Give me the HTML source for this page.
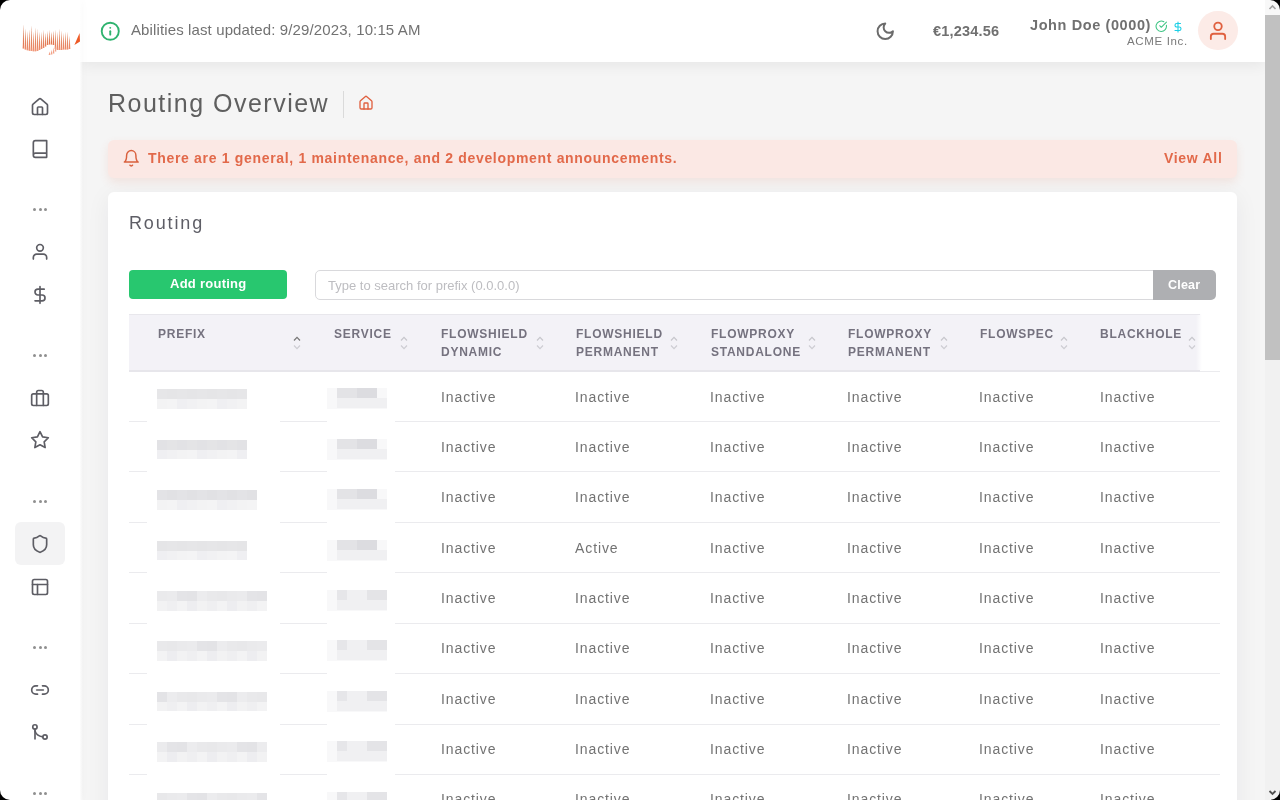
<!DOCTYPE html>
<html><head><meta charset="utf-8"><style>
*{box-sizing:border-box;margin:0;padding:0}
html,body{width:1280px;height:800px;overflow:hidden}
body{position:relative;background:#f5f5f5;font-family:"Liberation Sans",sans-serif;color:#6e6b7b}
.abs{position:absolute;white-space:nowrap}
#sidebar{position:absolute;left:0;top:0;width:80px;height:800px;background:#fff;box-shadow:0 0 10px rgba(0,0,0,0.04);z-index:3}
#sidefade{position:absolute;left:80px;top:0;width:3px;height:800px;background:linear-gradient(90deg,rgba(255,255,255,0.85),rgba(255,255,255,0));z-index:3}
#topbar{position:absolute;left:80px;top:0;width:1185px;height:62px;background:#fff;box-shadow:0 3px 14px rgba(0,0,0,0.065);z-index:2}
#scroll{position:absolute;left:1265px;top:0;width:15px;height:800px;background:#f1f1f1;z-index:4}
#thumb{position:absolute;left:0;top:15px;width:15px;height:345px;background:#c1c1c1}
#corners{position:absolute;left:0;top:0;width:1280px;height:800px;border-radius:10px;box-shadow:0 0 0 30px #000;z-index:10;pointer-events:none}
.ico{position:absolute;fill:none;stroke-linecap:round;stroke-linejoin:round;z-index:5}
.t{will-change:transform}
.blur{filter:blur(0.5px)}
.dots{position:absolute;left:33px;width:14px;height:4px}
.dots i{position:absolute;top:0;width:3.2px;height:3.2px;border-radius:50%;background:#8f8f8f}
</style></head><body>
<div id="sidebar"><div class="abs" style="left:15px;top:522px;width:50px;height:43px;border-radius:6px;background:#f3f3f4"></div><svg class="ico" style="left:30.0px;top:97.0px;width:20px;height:20px;stroke:#5d5d64;stroke-width:2" viewBox="0 0 24 24"><path d="M15 21v-8a1 1 0 0 0-1-1h-4a1 1 0 0 0-1 1v8"/><path d="M3 10a2 2 0 0 1 .709-1.528l7-5.999a2 2 0 0 1 2.582 0l7 5.999A2 2 0 0 1 21 10v9a2 2 0 0 1-2 2H5a2 2 0 0 1-2-2z"/></svg><svg class="ico" style="left:30.0px;top:139.0px;width:20px;height:20px;stroke:#5d5d64;stroke-width:2" viewBox="0 0 24 24"><path d="M4 19.5v-15A2.5 2.5 0 0 1 6.5 2H20v20H6.5a2.5 2.5 0 0 1 0-5H20"/></svg><svg class="ico" style="left:30.0px;top:242.0px;width:20px;height:20px;stroke:#5d5d64;stroke-width:2" viewBox="0 0 24 24"><circle cx="12" cy="7" r="4"/><path d="M4 20.5v-2a4 4 0 0 1 4-4h8a4 4 0 0 1 4 4v2"/></svg><svg class="ico" style="left:30.0px;top:285.0px;width:20px;height:20px;stroke:#5d5d64;stroke-width:2" viewBox="0 0 24 24"><line x1="12" x2="12" y1="2" y2="22"/><path d="M17 5H9.5a3.5 3.5 0 0 0 0 7h5a3.5 3.5 0 0 1 0 7H6"/></svg><svg class="ico" style="left:30.0px;top:388.0px;width:20px;height:20px;stroke:#5d5d64;stroke-width:2" viewBox="0 0 24 24"><rect width="20" height="14" x="2" y="7" rx="2" ry="2"/><path d="M16 21V5a2 2 0 0 0-2-2h-4a2 2 0 0 0-2 2v16"/></svg><svg class="ico" style="left:30.0px;top:430.0px;width:20px;height:20px;stroke:#5d5d64;stroke-width:2" viewBox="0 0 24 24"><polygon points="12 2 15.09 8.26 22 9.27 17 14.14 18.18 21.02 12 17.77 5.82 21.02 7 14.14 2 9.27 8.91 8.26 12 2"/></svg><svg class="ico" style="left:30.0px;top:534.0px;width:20px;height:20px;stroke:#5d5d64;stroke-width:2" viewBox="0 0 24 24"><path d="M20 13c0 5-3.5 7.5-7.66 8.95a1 1 0 0 1-.67-.01C7.5 20.5 4 18 4 13V6a1 1 0 0 1 1-1c2 0 4.5-1.2 6.24-2.72a1.170 1.17 0 0 1 1.52 0C14.51 3.81 17 5 19 5a1 1 0 0 1 1 1z"/></svg><svg class="ico" style="left:30.0px;top:577.0px;width:20px;height:20px;stroke:#5d5d64;stroke-width:2" viewBox="0 0 24 24"><rect width="18" height="18" x="3" y="3" rx="2"/><path d="M3 9h18"/><path d="M9 21V9"/></svg><svg class="ico" style="left:30.0px;top:680.0px;width:20px;height:20px;stroke:#5d5d64;stroke-width:2" viewBox="0 0 24 24"><path d="M9 17H7A5 5 0 0 1 7 7h2"/><path d="M15 7h2a5 5 0 1 1 0 10h-2"/><line x1="8" x2="16" y1="12" y2="12"/></svg><svg class="ico" style="left:30.0px;top:723.0px;width:20px;height:20px;stroke:#5d5d64;stroke-width:2" viewBox="0 0 24 24"><circle cx="5.9" cy="4.7" r="2.6"/><path d="M6 7.4V19.2"/><path d="M6 9.5Q7.5 15.5 15.4 16.6"/><circle cx="18" cy="16.8" r="2.6"/></svg><div class="dots" style="top:208px"><i style="left:0.1px"></i><i style="left:5.5px"></i><i style="left:10.8px"></i></div><div class="dots" style="top:354px"><i style="left:0.1px"></i><i style="left:5.5px"></i><i style="left:10.8px"></i></div><div class="dots" style="top:500px"><i style="left:0.1px"></i><i style="left:5.5px"></i><i style="left:10.8px"></i></div><div class="dots" style="top:646px"><i style="left:0.1px"></i><i style="left:5.5px"></i><i style="left:10.8px"></i></div><div class="dots" style="top:792px"><i style="left:0.1px"></i><i style="left:5.5px"></i><i style="left:10.8px"></i></div><svg style="position:absolute;left:0;top:0;width:80px;height:62px" viewBox="0 0 80 62"><defs><linearGradient id="lg" gradientUnits="userSpaceOnUse" x1="0" y1="24" x2="0" y2="52"><stop offset="0" stop-color="#b9532f"/><stop offset="0.55" stop-color="#d8673f"/><stop offset="1" stop-color="#f39c80"/></linearGradient><linearGradient id="lg2" gradientUnits="userSpaceOnUse" x1="0" y1="24" x2="0" y2="52"><stop offset="0" stop-color="#fff6ee"/><stop offset="0.5" stop-color="#fcd9c4"/><stop offset="1" stop-color="#f8b49c"/></linearGradient></defs><polygon points="23.5,24.3 24.55,48.5 22.45,48.5" fill="url(#lg2)"/><polygon points="23.5,24.3 24.1,48.5 22.9,48.5" fill="url(#lg)"/><polygon points="25.5,28 26.55,49.5 24.45,49.5" fill="url(#lg2)"/><polygon points="25.5,28 26.1,49.5 24.9,49.5" fill="url(#lg)"/><polygon points="27.5,31.1 28.55,50.2 26.45,50.2" fill="url(#lg2)"/><polygon points="27.5,31.1 28.1,50.2 26.9,50.2" fill="url(#lg)"/><polygon points="29.5,29.3 30.55,50.8 28.45,50.8" fill="url(#lg2)"/><polygon points="29.5,29.3 30.1,50.8 28.9,50.8" fill="url(#lg)"/><polygon points="31.5,24.8 32.55,51 30.45,51" fill="url(#lg2)"/><polygon points="31.5,24.8 32.1,51 30.9,51" fill="url(#lg)"/><polygon points="33.5,31.8 34.55,51.2 32.45,51.2" fill="url(#lg2)"/><polygon points="33.5,31.8 34.1,51.2 32.9,51.2" fill="url(#lg)"/><polygon points="35.5,27.2 36.55,51.2 34.45,51.2" fill="url(#lg2)"/><polygon points="35.5,27.2 36.1,51.2 34.9,51.2" fill="url(#lg)"/><polygon points="37.5,28.7 38.55,51 36.45,51" fill="url(#lg2)"/><polygon points="37.5,28.7 38.1,51 36.9,51" fill="url(#lg)"/><polygon points="39.5,31.6 40.55,50 38.45,50" fill="url(#lg2)"/><polygon points="39.5,31.6 40.1,50 38.9,50" fill="url(#lg)"/><polygon points="41.5,32.1 42.55,49 40.45,49" fill="url(#lg2)"/><polygon points="41.5,32.1 42.1,49 40.9,49" fill="url(#lg)"/><polygon points="43.5,29.9 44.55,48 42.45,48" fill="url(#lg2)"/><polygon points="43.5,29.9 44.1,48 42.9,48" fill="url(#lg)"/><polygon points="45.5,32.4 46.55,46.5 44.45,46.5" fill="url(#lg2)"/><polygon points="45.5,32.4 46.1,46.5 44.9,46.5" fill="url(#lg)"/><polygon points="47.5,31.1 48.55,45 46.45,45" fill="url(#lg2)"/><polygon points="47.5,31.1 48.1,45 46.9,45" fill="url(#lg)"/><polygon points="49.5,29.8 50.55,44.5 48.45,44.5" fill="url(#lg2)"/><polygon points="49.5,29.8 50.1,44.5 48.9,44.5" fill="url(#lg)"/><polygon points="51.5,31.6 52.55,44.5 50.45,44.5" fill="url(#lg2)"/><polygon points="51.5,31.6 52.1,44.5 50.9,44.5" fill="url(#lg)"/><polygon points="53.5,30.6 54.55,45 52.45,45" fill="url(#lg2)"/><polygon points="53.5,30.6 54.1,45 52.9,45" fill="url(#lg)"/><polygon points="55.5,30 56.55,49 54.45,49" fill="url(#lg2)"/><polygon points="55.5,30 56.1,49 54.9,49" fill="url(#lg)"/><polygon points="57.5,32.1 58.55,50 56.45,50" fill="url(#lg2)"/><polygon points="57.5,32.1 58.1,50 56.9,50" fill="url(#lg)"/><polygon points="59.5,28.5 60.55,50 58.45,50" fill="url(#lg2)"/><polygon points="59.5,28.5 60.1,50 58.9,50" fill="url(#lg)"/><polygon points="61.5,30 62.55,50 60.45,50" fill="url(#lg2)"/><polygon points="61.5,30 62.1,50 60.9,50" fill="url(#lg)"/><polygon points="63.5,33 64.55,49.5 62.45,49.5" fill="url(#lg2)"/><polygon points="63.5,33 64.1,49.5 62.9,49.5" fill="url(#lg)"/><polygon points="65.5,32.1 66.55,49.5 64.45,49.5" fill="url(#lg2)"/><polygon points="65.5,32.1 66.1,49.5 64.9,49.5" fill="url(#lg)"/><polygon points="67.5,32.1 68.55,49.5 66.45,49.5" fill="url(#lg2)"/><polygon points="67.5,32.1 68.1,49.5 66.9,49.5" fill="url(#lg)"/><polygon points="69.5,36 70.55,49 68.45,49" fill="url(#lg2)"/><polygon points="69.5,36 70.1,49 68.9,49" fill="url(#lg)"/><polygon points="49.5,51.5 50.4,55 48.6,55" fill="#f2a288"/><polygon points="51.5,49.5 52.4,54.5 50.6,54.5" fill="#f2a288"/><polygon points="53.5,47.5 54.4,53.5 52.6,53.5" fill="#f2a288"/><polygon points="55.5,46 56.4,51.5 54.6,51.5" fill="#f2a288"/><polygon points="79.6,33 74.4,45 80,41.5" fill="#ee5a26"/></svg></div><div id="sidefade"></div>
<div id="topbar"></div>
<svg class="ico" style="left:100.15px;top:21.05px;width:20.5px;height:20.5px;stroke:#2fb36f;stroke-width:2.2" viewBox="0 0 24 24"><circle cx="12" cy="12" r="10"/><path d="M12 16v-4"/><path d="M12 8h.01"/></svg><div class="abs t" style="left:131.4px;top:22.23px;font-size:15px;line-height:15px;font-weight:400;color:#727272;letter-spacing:0.12px;z-index:5;">Abilities last updated: 9/29/2023, 10:15 AM</div><svg class="ico" style="left:875.35px;top:21.35px;width:20.5px;height:20.5px;stroke:#6b6b6b;stroke-width:2.3" viewBox="0 0 24 24"><path d="M12 3a6 6 0 0 0 9 9 9 9 0 1 1-9-9Z"/></svg><div class="abs t" style="left:932.5px;top:23.71px;font-size:14.5px;line-height:14.5px;font-weight:700;color:#707070;letter-spacing:0.2px;z-index:5;">€1,234.56</div><div class="abs t" style="left:1030px;top:17.61px;font-size:14.5px;line-height:14.5px;font-weight:700;color:#707070;letter-spacing:0.6px;z-index:5;">John Doe (0000)</div><svg class="ico" style="left:1155.45px;top:20.05px;width:12.5px;height:12.5px;stroke:#3cc483;stroke-width:2" viewBox="0 0 24 24"><path d="M21.801 10A10 10 0 1 1 17 3.335"/><path d="m9 11 3 3L22 4"/></svg><svg class="ico" style="left:1171.8px;top:20.5px;width:12px;height:12px;stroke:#1ccfe6;stroke-width:2.2" viewBox="0 0 24 24"><line x1="12" x2="12" y1="2" y2="22"/><path d="M17 5H9.5a3.5 3.5 0 0 0 0 7h5a3.5 3.5 0 0 1 0 7H6"/></svg><div class="abs t" style="left:1127.3px;top:35.98px;font-size:11.5px;line-height:11.5px;font-weight:400;color:#7a7a7a;letter-spacing:0.65px;z-index:5;">ACME Inc.</div><div class="abs" style="left:1198px;top:10.7px;width:39.5px;height:39.5px;border-radius:50%;background:#fcebe7;z-index:5"></div><svg class="ico" style="left:1207.0px;top:20.0px;width:22px;height:22px;stroke:#e0603f;stroke-width:2" viewBox="0 0 24 24"><circle cx="12" cy="6.9" r="4.1"/><path d="M4.2 20.8v-2.8a3 3 0 0 1 3-3h9.6a3 3 0 0 1 3 3v2.8"/></svg>
<div class="abs t" style="left:108px;top:90.55px;font-size:25px;line-height:25px;font-weight:400;color:#5f5f5f;letter-spacing:1.49px;z-index:5;">Routing Overview</div><div class="abs" style="left:342.5px;top:90.5px;width:1px;height:27px;background:#dadada"></div><svg class="ico" style="left:358.0px;top:95.0px;width:16px;height:16px;stroke:#e0603f;stroke-width:2" viewBox="0 0 24 24"><path d="M15 21v-8a1 1 0 0 0-1-1h-4a1 1 0 0 0-1 1v8"/><path d="M3 10a2 2 0 0 1 .709-1.528l7-5.999a2 2 0 0 1 2.582 0l7 5.999A2 2 0 0 1 21 10v9a2 2 0 0 1-2 2H5a2 2 0 0 1-2-2z"/></svg><div class="abs" style="left:108px;top:140px;width:1129px;height:38px;border-radius:6px;background:#fbe8e4;box-shadow:0 4px 10px rgba(224,96,63,0.12)"></div><svg class="ico" style="left:121.55000000000001px;top:149.35px;width:18.5px;height:18.5px;stroke:#d9603d;stroke-width:1.9" viewBox="0 0 24 24"><path d="M6 8a6 6 0 0 1 12 0c0 7 3 9 3 9H3s3-2 3-9"/><path d="M10.3 21a1.94 1.94 0 0 0 3.4 0"/></svg><div class="abs t" style="left:148px;top:150.79px;font-size:14px;line-height:14px;font-weight:700;color:#e2694a;letter-spacing:0.68px;z-index:5;">There are 1 general, 1 maintenance, and 2 development announcements.</div><div class="abs t" style="left:1164px;top:151.29px;font-size:14px;line-height:14px;font-weight:700;color:#e2694a;letter-spacing:0.7px;z-index:5;">View All</div><div class="abs" style="left:108px;top:192px;width:1129px;height:700px;border-radius:6px;background:#fff;box-shadow:0 4px 24px rgba(34,41,47,0.06)"></div><div class="abs t" style="left:129.1px;top:214.36px;font-size:18px;line-height:18px;font-weight:400;color:#5e5e66;letter-spacing:1.85px;z-index:5;">Routing</div><div class="abs" style="left:129px;top:270px;width:158px;height:29px;border-radius:4px;background:#28c76f"></div><div class="abs t" style="left:169.5px;top:276.65px;font-size:13px;line-height:13px;font-weight:700;color:#ffffff;letter-spacing:0.26px;z-index:5;">Add routing</div><div class="abs" style="left:315px;top:270px;width:840px;height:30px;border:1px solid #d9d9dc;border-radius:5px 0 0 5px;background:#fff"></div><div class="abs t" style="left:328.1px;top:279.25px;font-size:13px;line-height:13px;font-weight:400;color:#bdbdc1;letter-spacing:0px;z-index:5;">Type to search for prefix (0.0.0.0)</div><div class="abs" style="left:1153px;top:270px;width:63px;height:30px;border-radius:0 5px 5px 0;background:#aeafb2"></div><div class="abs t" style="left:1168px;top:279.22px;font-size:12.5px;line-height:12.5px;font-weight:700;color:#ffffff;letter-spacing:0.2px;z-index:5;">Clear</div><div class="abs" style="left:129px;top:314px;width:1073px;height:56px;background:linear-gradient(90deg,#f3f2f7 0,#f3f2f7 1067px,rgba(243,242,247,0) 1073px)"></div><div class="abs" style="left:129px;top:314px;width:1071px;height:1px;background:#e8e7ec"></div><div class="abs" style="left:129px;top:369.5px;width:1071px;height:2px;background:#e7e6eb"></div><div class="abs" style="left:1200px;top:370.5px;width:19.5px;height:1px;background:#ebebee"></div><div class="abs t" style="left:157.5px;top:328.10px;font-size:12px;line-height:12px;font-weight:700;color:#75727f;letter-spacing:0.75px;z-index:5;">PREFIX</div><svg class="abs" style="left:293.4px;top:335px;width:8px;height:16px;z-index:5" viewBox="0 0 8 16"><path d="M1 5.5L4 2.3L7 5.5" fill="none" stroke="#777777" stroke-width="1.2"/><path d="M1 10.5L4 13.7L7 10.5" fill="none" stroke="#cdcdd3" stroke-width="1.2"/></svg><div class="abs t" style="left:334.25px;top:328.10px;font-size:12px;line-height:12px;font-weight:700;color:#75727f;letter-spacing:0.75px;z-index:5;">SERVICE</div><svg class="abs" style="left:399.6px;top:335px;width:8px;height:16px;z-index:5" viewBox="0 0 8 16"><path d="M1 5.5L4 2.3L7 5.5" fill="none" stroke="#c6c6cc" stroke-width="1.2"/><path d="M1 10.5L4 13.7L7 10.5" fill="none" stroke="#cdcdd3" stroke-width="1.2"/></svg><div class="abs t" style="left:440.8px;top:328.10px;font-size:12px;line-height:12px;font-weight:700;color:#75727f;letter-spacing:0.75px;z-index:5;">FLOWSHIELD</div><div class="abs t" style="left:440.8px;top:346.10px;font-size:12px;line-height:12px;font-weight:700;color:#75727f;letter-spacing:0.75px;z-index:5;">DYNAMIC</div><svg class="abs" style="left:535.9px;top:335px;width:8px;height:16px;z-index:5" viewBox="0 0 8 16"><path d="M1 5.5L4 2.3L7 5.5" fill="none" stroke="#c6c6cc" stroke-width="1.2"/><path d="M1 10.5L4 13.7L7 10.5" fill="none" stroke="#cdcdd3" stroke-width="1.2"/></svg><div class="abs t" style="left:576px;top:328.10px;font-size:12px;line-height:12px;font-weight:700;color:#75727f;letter-spacing:0.75px;z-index:5;">FLOWSHIELD</div><div class="abs t" style="left:576px;top:346.10px;font-size:12px;line-height:12px;font-weight:700;color:#75727f;letter-spacing:0.75px;z-index:5;">PERMANENT</div><svg class="abs" style="left:670px;top:335px;width:8px;height:16px;z-index:5" viewBox="0 0 8 16"><path d="M1 5.5L4 2.3L7 5.5" fill="none" stroke="#c6c6cc" stroke-width="1.2"/><path d="M1 10.5L4 13.7L7 10.5" fill="none" stroke="#cdcdd3" stroke-width="1.2"/></svg><div class="abs t" style="left:711px;top:328.10px;font-size:12px;line-height:12px;font-weight:700;color:#75727f;letter-spacing:0.75px;z-index:5;">FLOWPROXY</div><div class="abs t" style="left:711px;top:346.10px;font-size:12px;line-height:12px;font-weight:700;color:#75727f;letter-spacing:0.75px;z-index:5;">STANDALONE</div><svg class="abs" style="left:807.7px;top:335px;width:8px;height:16px;z-index:5" viewBox="0 0 8 16"><path d="M1 5.5L4 2.3L7 5.5" fill="none" stroke="#c6c6cc" stroke-width="1.2"/><path d="M1 10.5L4 13.7L7 10.5" fill="none" stroke="#cdcdd3" stroke-width="1.2"/></svg><div class="abs t" style="left:848.3px;top:328.10px;font-size:12px;line-height:12px;font-weight:700;color:#75727f;letter-spacing:0.75px;z-index:5;">FLOWPROXY</div><div class="abs t" style="left:848.3px;top:346.10px;font-size:12px;line-height:12px;font-weight:700;color:#75727f;letter-spacing:0.75px;z-index:5;">PERMANENT</div><svg class="abs" style="left:939.7px;top:335px;width:8px;height:16px;z-index:5" viewBox="0 0 8 16"><path d="M1 5.5L4 2.3L7 5.5" fill="none" stroke="#c6c6cc" stroke-width="1.2"/><path d="M1 10.5L4 13.7L7 10.5" fill="none" stroke="#cdcdd3" stroke-width="1.2"/></svg><div class="abs t" style="left:979.5px;top:328.10px;font-size:12px;line-height:12px;font-weight:700;color:#75727f;letter-spacing:0.75px;z-index:5;">FLOWSPEC</div><svg class="abs" style="left:1059.5px;top:335px;width:8px;height:16px;z-index:5" viewBox="0 0 8 16"><path d="M1 5.5L4 2.3L7 5.5" fill="none" stroke="#c6c6cc" stroke-width="1.2"/><path d="M1 10.5L4 13.7L7 10.5" fill="none" stroke="#cdcdd3" stroke-width="1.2"/></svg><div class="abs t" style="left:1100.2px;top:328.10px;font-size:12px;line-height:12px;font-weight:700;color:#75727f;letter-spacing:0.75px;z-index:5;">BLACKHOLE</div><svg class="abs" style="left:1187.5px;top:335px;width:8px;height:16px;z-index:5" viewBox="0 0 8 16"><path d="M1 5.5L4 2.3L7 5.5" fill="none" stroke="#c6c6cc" stroke-width="1.2"/><path d="M1 10.5L4 13.7L7 10.5" fill="none" stroke="#cdcdd3" stroke-width="1.2"/></svg><div class="abs" style="left:129px;top:421.00px;width:17.5px;height:1px;background:#ebebee"></div><div class="abs" style="left:280px;top:421.00px;width:47px;height:1px;background:#ebebee"></div><div class="abs" style="left:395px;top:421.00px;width:824.5px;height:1px;background:#ebebee"></div><div class="abs blur" style="left:157px;top:389.30px;width:10px;height:10px;background:#e6e6e8"></div><div class="abs blur" style="left:157px;top:399.30px;width:10px;height:9.5px;background:#f3f3f4"></div><div class="abs blur" style="left:167px;top:389.30px;width:10px;height:10px;background:#e5e5e7"></div><div class="abs blur" style="left:167px;top:399.30px;width:10px;height:9.5px;background:#f4f4f5"></div><div class="abs blur" style="left:177px;top:389.30px;width:10px;height:10px;background:#e6e6e8"></div><div class="abs blur" style="left:177px;top:399.30px;width:10px;height:9.5px;background:#efeff2"></div><div class="abs blur" style="left:187px;top:389.30px;width:10px;height:10px;background:#e5e5e7"></div><div class="abs blur" style="left:187px;top:399.30px;width:10px;height:9.5px;background:#f1f1f3"></div><div class="abs blur" style="left:197px;top:389.30px;width:10px;height:10px;background:#e6e6e8"></div><div class="abs blur" style="left:197px;top:399.30px;width:10px;height:9.5px;background:#f3f3f4"></div><div class="abs blur" style="left:207px;top:389.30px;width:10px;height:10px;background:#e5e5e7"></div><div class="abs blur" style="left:207px;top:399.30px;width:10px;height:9.5px;background:#f4f4f5"></div><div class="abs blur" style="left:217px;top:389.30px;width:10px;height:10px;background:#e6e6e8"></div><div class="abs blur" style="left:217px;top:399.30px;width:10px;height:9.5px;background:#efeff2"></div><div class="abs blur" style="left:227px;top:389.30px;width:10px;height:10px;background:#e5e5e7"></div><div class="abs blur" style="left:227px;top:399.30px;width:10px;height:9.5px;background:#f1f1f3"></div><div class="abs blur" style="left:237px;top:389.30px;width:10px;height:10px;background:#e6e6e8"></div><div class="abs blur" style="left:237px;top:399.30px;width:10px;height:9.5px;background:#f3f3f4"></div><div class="abs blur" style="left:327px;top:388.30px;width:60px;height:21px;background:#f8f8f9"></div><div class="abs blur" style="left:337px;top:388.30px;width:20px;height:10px;background:#e3e3e6"></div><div class="abs blur" style="left:357px;top:388.30px;width:20px;height:10px;background:#dcdce0"></div><div class="abs blur" style="left:337px;top:398.30px;width:50px;height:10px;background:#f0f0f2"></div><div class="abs t" style="left:440.5px;top:389.89px;font-size:14px;line-height:14px;font-weight:400;color:#737373;letter-spacing:0.9px;z-index:5;">Inactive</div><div class="abs t" style="left:575px;top:389.89px;font-size:14px;line-height:14px;font-weight:400;color:#737373;letter-spacing:0.9px;z-index:5;">Inactive</div><div class="abs t" style="left:710px;top:389.89px;font-size:14px;line-height:14px;font-weight:400;color:#737373;letter-spacing:0.9px;z-index:5;">Inactive</div><div class="abs t" style="left:847px;top:389.89px;font-size:14px;line-height:14px;font-weight:400;color:#737373;letter-spacing:0.9px;z-index:5;">Inactive</div><div class="abs t" style="left:978.5px;top:389.89px;font-size:14px;line-height:14px;font-weight:400;color:#737373;letter-spacing:0.9px;z-index:5;">Inactive</div><div class="abs t" style="left:1099.5px;top:389.89px;font-size:14px;line-height:14px;font-weight:400;color:#737373;letter-spacing:0.9px;z-index:5;">Inactive</div><div class="abs" style="left:129px;top:471.43px;width:17.5px;height:1px;background:#ebebee"></div><div class="abs" style="left:280px;top:471.43px;width:47px;height:1px;background:#ebebee"></div><div class="abs" style="left:395px;top:471.43px;width:824.5px;height:1px;background:#ebebee"></div><div class="abs blur" style="left:157px;top:439.73px;width:10px;height:10px;background:#e2e2e5"></div><div class="abs blur" style="left:157px;top:449.73px;width:10px;height:9.5px;background:#efeff2"></div><div class="abs blur" style="left:167px;top:439.73px;width:10px;height:10px;background:#e4e4e6"></div><div class="abs blur" style="left:167px;top:449.73px;width:10px;height:9.5px;background:#f1f1f3"></div><div class="abs blur" style="left:177px;top:439.73px;width:10px;height:10px;background:#e2e2e5"></div><div class="abs blur" style="left:177px;top:449.73px;width:10px;height:9.5px;background:#f3f3f4"></div><div class="abs blur" style="left:187px;top:439.73px;width:10px;height:10px;background:#e4e4e6"></div><div class="abs blur" style="left:187px;top:449.73px;width:10px;height:9.5px;background:#f4f4f5"></div><div class="abs blur" style="left:197px;top:439.73px;width:10px;height:10px;background:#e2e2e5"></div><div class="abs blur" style="left:197px;top:449.73px;width:10px;height:9.5px;background:#efeff2"></div><div class="abs blur" style="left:207px;top:439.73px;width:10px;height:10px;background:#e4e4e6"></div><div class="abs blur" style="left:207px;top:449.73px;width:10px;height:9.5px;background:#f1f1f3"></div><div class="abs blur" style="left:217px;top:439.73px;width:10px;height:10px;background:#e2e2e5"></div><div class="abs blur" style="left:217px;top:449.73px;width:10px;height:9.5px;background:#f3f3f4"></div><div class="abs blur" style="left:227px;top:439.73px;width:10px;height:10px;background:#e4e4e6"></div><div class="abs blur" style="left:227px;top:449.73px;width:10px;height:9.5px;background:#f4f4f5"></div><div class="abs blur" style="left:237px;top:439.73px;width:10px;height:10px;background:#e2e2e5"></div><div class="abs blur" style="left:237px;top:449.73px;width:10px;height:9.5px;background:#efeff2"></div><div class="abs blur" style="left:327px;top:438.73px;width:60px;height:21px;background:#f8f8f9"></div><div class="abs blur" style="left:337px;top:438.73px;width:20px;height:10px;background:#e3e3e6"></div><div class="abs blur" style="left:357px;top:438.73px;width:20px;height:10px;background:#dcdce0"></div><div class="abs blur" style="left:337px;top:448.73px;width:50px;height:10px;background:#f0f0f2"></div><div class="abs t" style="left:440.5px;top:440.17px;font-size:14px;line-height:14px;font-weight:400;color:#737373;letter-spacing:0.9px;z-index:5;">Inactive</div><div class="abs t" style="left:575px;top:440.17px;font-size:14px;line-height:14px;font-weight:400;color:#737373;letter-spacing:0.9px;z-index:5;">Inactive</div><div class="abs t" style="left:710px;top:440.17px;font-size:14px;line-height:14px;font-weight:400;color:#737373;letter-spacing:0.9px;z-index:5;">Inactive</div><div class="abs t" style="left:847px;top:440.17px;font-size:14px;line-height:14px;font-weight:400;color:#737373;letter-spacing:0.9px;z-index:5;">Inactive</div><div class="abs t" style="left:978.5px;top:440.17px;font-size:14px;line-height:14px;font-weight:400;color:#737373;letter-spacing:0.9px;z-index:5;">Inactive</div><div class="abs t" style="left:1099.5px;top:440.17px;font-size:14px;line-height:14px;font-weight:400;color:#737373;letter-spacing:0.9px;z-index:5;">Inactive</div><div class="abs" style="left:129px;top:521.86px;width:17.5px;height:1px;background:#ebebee"></div><div class="abs" style="left:280px;top:521.86px;width:47px;height:1px;background:#ebebee"></div><div class="abs" style="left:395px;top:521.86px;width:824.5px;height:1px;background:#ebebee"></div><div class="abs blur" style="left:157px;top:490.16px;width:10px;height:10px;background:#e3e3e6"></div><div class="abs blur" style="left:157px;top:500.16px;width:10px;height:9.5px;background:#f3f3f4"></div><div class="abs blur" style="left:167px;top:490.16px;width:10px;height:10px;background:#e1e1e4"></div><div class="abs blur" style="left:167px;top:500.16px;width:10px;height:9.5px;background:#f4f4f5"></div><div class="abs blur" style="left:177px;top:490.16px;width:10px;height:10px;background:#e3e3e6"></div><div class="abs blur" style="left:177px;top:500.16px;width:10px;height:9.5px;background:#efeff2"></div><div class="abs blur" style="left:187px;top:490.16px;width:10px;height:10px;background:#e1e1e4"></div><div class="abs blur" style="left:187px;top:500.16px;width:10px;height:9.5px;background:#f1f1f3"></div><div class="abs blur" style="left:197px;top:490.16px;width:10px;height:10px;background:#e3e3e6"></div><div class="abs blur" style="left:197px;top:500.16px;width:10px;height:9.5px;background:#f3f3f4"></div><div class="abs blur" style="left:207px;top:490.16px;width:10px;height:10px;background:#e1e1e4"></div><div class="abs blur" style="left:207px;top:500.16px;width:10px;height:9.5px;background:#f4f4f5"></div><div class="abs blur" style="left:217px;top:490.16px;width:10px;height:10px;background:#e3e3e6"></div><div class="abs blur" style="left:217px;top:500.16px;width:10px;height:9.5px;background:#efeff2"></div><div class="abs blur" style="left:227px;top:490.16px;width:10px;height:10px;background:#e1e1e4"></div><div class="abs blur" style="left:227px;top:500.16px;width:10px;height:9.5px;background:#f1f1f3"></div><div class="abs blur" style="left:237px;top:490.16px;width:10px;height:10px;background:#e3e3e6"></div><div class="abs blur" style="left:237px;top:500.16px;width:10px;height:9.5px;background:#f3f3f4"></div><div class="abs blur" style="left:247px;top:490.16px;width:10px;height:10px;background:#e1e1e4"></div><div class="abs blur" style="left:247px;top:500.16px;width:10px;height:9.5px;background:#f4f4f5"></div><div class="abs blur" style="left:327px;top:489.16px;width:60px;height:21px;background:#f8f8f9"></div><div class="abs blur" style="left:337px;top:489.16px;width:20px;height:10px;background:#e3e3e6"></div><div class="abs blur" style="left:357px;top:489.16px;width:20px;height:10px;background:#dcdce0"></div><div class="abs blur" style="left:337px;top:499.16px;width:50px;height:10px;background:#f0f0f2"></div><div class="abs t" style="left:440.5px;top:490.45px;font-size:14px;line-height:14px;font-weight:400;color:#737373;letter-spacing:0.9px;z-index:5;">Inactive</div><div class="abs t" style="left:575px;top:490.45px;font-size:14px;line-height:14px;font-weight:400;color:#737373;letter-spacing:0.9px;z-index:5;">Inactive</div><div class="abs t" style="left:710px;top:490.45px;font-size:14px;line-height:14px;font-weight:400;color:#737373;letter-spacing:0.9px;z-index:5;">Inactive</div><div class="abs t" style="left:847px;top:490.45px;font-size:14px;line-height:14px;font-weight:400;color:#737373;letter-spacing:0.9px;z-index:5;">Inactive</div><div class="abs t" style="left:978.5px;top:490.45px;font-size:14px;line-height:14px;font-weight:400;color:#737373;letter-spacing:0.9px;z-index:5;">Inactive</div><div class="abs t" style="left:1099.5px;top:490.45px;font-size:14px;line-height:14px;font-weight:400;color:#737373;letter-spacing:0.9px;z-index:5;">Inactive</div><div class="abs" style="left:129px;top:572.29px;width:17.5px;height:1px;background:#ebebee"></div><div class="abs" style="left:280px;top:572.29px;width:47px;height:1px;background:#ebebee"></div><div class="abs" style="left:395px;top:572.29px;width:824.5px;height:1px;background:#ebebee"></div><div class="abs blur" style="left:157px;top:540.59px;width:10px;height:10px;background:#e5e5e7"></div><div class="abs blur" style="left:157px;top:550.59px;width:10px;height:9.5px;background:#efeff2"></div><div class="abs blur" style="left:167px;top:540.59px;width:10px;height:10px;background:#e6e6e8"></div><div class="abs blur" style="left:167px;top:550.59px;width:10px;height:9.5px;background:#f1f1f3"></div><div class="abs blur" style="left:177px;top:540.59px;width:10px;height:10px;background:#e5e5e7"></div><div class="abs blur" style="left:177px;top:550.59px;width:10px;height:9.5px;background:#f3f3f4"></div><div class="abs blur" style="left:187px;top:540.59px;width:10px;height:10px;background:#e6e6e8"></div><div class="abs blur" style="left:187px;top:550.59px;width:10px;height:9.5px;background:#f4f4f5"></div><div class="abs blur" style="left:197px;top:540.59px;width:10px;height:10px;background:#e5e5e7"></div><div class="abs blur" style="left:197px;top:550.59px;width:10px;height:9.5px;background:#efeff2"></div><div class="abs blur" style="left:207px;top:540.59px;width:10px;height:10px;background:#e6e6e8"></div><div class="abs blur" style="left:207px;top:550.59px;width:10px;height:9.5px;background:#f1f1f3"></div><div class="abs blur" style="left:217px;top:540.59px;width:10px;height:10px;background:#e5e5e7"></div><div class="abs blur" style="left:217px;top:550.59px;width:10px;height:9.5px;background:#f3f3f4"></div><div class="abs blur" style="left:227px;top:540.59px;width:10px;height:10px;background:#e6e6e8"></div><div class="abs blur" style="left:227px;top:550.59px;width:10px;height:9.5px;background:#f4f4f5"></div><div class="abs blur" style="left:237px;top:540.59px;width:10px;height:10px;background:#e5e5e7"></div><div class="abs blur" style="left:237px;top:550.59px;width:10px;height:9.5px;background:#efeff2"></div><div class="abs blur" style="left:327px;top:539.59px;width:60px;height:21px;background:#f8f8f9"></div><div class="abs blur" style="left:337px;top:539.59px;width:20px;height:10px;background:#e3e3e6"></div><div class="abs blur" style="left:357px;top:539.59px;width:20px;height:10px;background:#dcdce0"></div><div class="abs blur" style="left:337px;top:549.59px;width:50px;height:10px;background:#f0f0f2"></div><div class="abs t" style="left:440.5px;top:540.73px;font-size:14px;line-height:14px;font-weight:400;color:#737373;letter-spacing:0.9px;z-index:5;">Inactive</div><div class="abs t" style="left:575px;top:540.73px;font-size:14px;line-height:14px;font-weight:400;color:#737373;letter-spacing:0.9px;z-index:5;">Active</div><div class="abs t" style="left:710px;top:540.73px;font-size:14px;line-height:14px;font-weight:400;color:#737373;letter-spacing:0.9px;z-index:5;">Inactive</div><div class="abs t" style="left:847px;top:540.73px;font-size:14px;line-height:14px;font-weight:400;color:#737373;letter-spacing:0.9px;z-index:5;">Inactive</div><div class="abs t" style="left:978.5px;top:540.73px;font-size:14px;line-height:14px;font-weight:400;color:#737373;letter-spacing:0.9px;z-index:5;">Inactive</div><div class="abs t" style="left:1099.5px;top:540.73px;font-size:14px;line-height:14px;font-weight:400;color:#737373;letter-spacing:0.9px;z-index:5;">Inactive</div><div class="abs" style="left:129px;top:622.72px;width:17.5px;height:1px;background:#ebebee"></div><div class="abs" style="left:280px;top:622.72px;width:47px;height:1px;background:#ebebee"></div><div class="abs" style="left:395px;top:622.72px;width:824.5px;height:1px;background:#ebebee"></div><div class="abs blur" style="left:157px;top:591.02px;width:10px;height:10px;background:#eaeaec"></div><div class="abs blur" style="left:157px;top:601.02px;width:10px;height:9.5px;background:#f2f2f3"></div><div class="abs blur" style="left:167px;top:591.02px;width:10px;height:10px;background:#ebebed"></div><div class="abs blur" style="left:167px;top:601.02px;width:10px;height:9.5px;background:#efeff1"></div><div class="abs blur" style="left:177px;top:591.02px;width:10px;height:10px;background:#e4e4e7"></div><div class="abs blur" style="left:177px;top:601.02px;width:10px;height:9.5px;background:#f3f3f4"></div><div class="abs blur" style="left:187px;top:591.02px;width:10px;height:10px;background:#e3e3e6"></div><div class="abs blur" style="left:187px;top:601.02px;width:10px;height:9.5px;background:#ededf0"></div><div class="abs blur" style="left:197px;top:591.02px;width:10px;height:10px;background:#ececee"></div><div class="abs blur" style="left:197px;top:601.02px;width:10px;height:9.5px;background:#f2f2f3"></div><div class="abs blur" style="left:207px;top:591.02px;width:10px;height:10px;background:#e9e9eb"></div><div class="abs blur" style="left:207px;top:601.02px;width:10px;height:9.5px;background:#efeff1"></div><div class="abs blur" style="left:217px;top:591.02px;width:10px;height:10px;background:#e8e8ea"></div><div class="abs blur" style="left:217px;top:601.02px;width:10px;height:9.5px;background:#f3f3f4"></div><div class="abs blur" style="left:227px;top:591.02px;width:10px;height:10px;background:#eaeaec"></div><div class="abs blur" style="left:227px;top:601.02px;width:10px;height:9.5px;background:#ededf0"></div><div class="abs blur" style="left:237px;top:591.02px;width:10px;height:10px;background:#ebebed"></div><div class="abs blur" style="left:237px;top:601.02px;width:10px;height:9.5px;background:#f2f2f3"></div><div class="abs blur" style="left:247px;top:591.02px;width:10px;height:10px;background:#e4e4e7"></div><div class="abs blur" style="left:247px;top:601.02px;width:10px;height:9.5px;background:#efeff1"></div><div class="abs blur" style="left:257px;top:591.02px;width:10px;height:10px;background:#e3e3e6"></div><div class="abs blur" style="left:257px;top:601.02px;width:10px;height:9.5px;background:#f3f3f4"></div><div class="abs blur" style="left:327px;top:590.02px;width:60px;height:21px;background:#f8f8f9"></div><div class="abs blur" style="left:337px;top:590.02px;width:50px;height:20px;background:#f0f0f2"></div><div class="abs blur" style="left:337px;top:590.02px;width:10px;height:10px;background:#e6e6e9"></div><div class="abs blur" style="left:367px;top:590.02px;width:20px;height:10px;background:#e4e4e7"></div><div class="abs t" style="left:440.5px;top:591.01px;font-size:14px;line-height:14px;font-weight:400;color:#737373;letter-spacing:0.9px;z-index:5;">Inactive</div><div class="abs t" style="left:575px;top:591.01px;font-size:14px;line-height:14px;font-weight:400;color:#737373;letter-spacing:0.9px;z-index:5;">Inactive</div><div class="abs t" style="left:710px;top:591.01px;font-size:14px;line-height:14px;font-weight:400;color:#737373;letter-spacing:0.9px;z-index:5;">Inactive</div><div class="abs t" style="left:847px;top:591.01px;font-size:14px;line-height:14px;font-weight:400;color:#737373;letter-spacing:0.9px;z-index:5;">Inactive</div><div class="abs t" style="left:978.5px;top:591.01px;font-size:14px;line-height:14px;font-weight:400;color:#737373;letter-spacing:0.9px;z-index:5;">Inactive</div><div class="abs t" style="left:1099.5px;top:591.01px;font-size:14px;line-height:14px;font-weight:400;color:#737373;letter-spacing:0.9px;z-index:5;">Inactive</div><div class="abs" style="left:129px;top:673.15px;width:17.5px;height:1px;background:#ebebee"></div><div class="abs" style="left:280px;top:673.15px;width:47px;height:1px;background:#ebebee"></div><div class="abs" style="left:395px;top:673.15px;width:824.5px;height:1px;background:#ebebee"></div><div class="abs blur" style="left:157px;top:641.45px;width:10px;height:10px;background:#e9e9eb"></div><div class="abs blur" style="left:157px;top:651.45px;width:10px;height:9.5px;background:#f3f3f4"></div><div class="abs blur" style="left:167px;top:641.45px;width:10px;height:10px;background:#e8e8ea"></div><div class="abs blur" style="left:167px;top:651.45px;width:10px;height:9.5px;background:#ededf0"></div><div class="abs blur" style="left:177px;top:641.45px;width:10px;height:10px;background:#eaeaec"></div><div class="abs blur" style="left:177px;top:651.45px;width:10px;height:9.5px;background:#f2f2f3"></div><div class="abs blur" style="left:187px;top:641.45px;width:10px;height:10px;background:#ebebed"></div><div class="abs blur" style="left:187px;top:651.45px;width:10px;height:9.5px;background:#efeff1"></div><div class="abs blur" style="left:197px;top:641.45px;width:10px;height:10px;background:#e4e4e7"></div><div class="abs blur" style="left:197px;top:651.45px;width:10px;height:9.5px;background:#f3f3f4"></div><div class="abs blur" style="left:207px;top:641.45px;width:10px;height:10px;background:#e3e3e6"></div><div class="abs blur" style="left:207px;top:651.45px;width:10px;height:9.5px;background:#ededf0"></div><div class="abs blur" style="left:217px;top:641.45px;width:10px;height:10px;background:#ececee"></div><div class="abs blur" style="left:217px;top:651.45px;width:10px;height:9.5px;background:#f2f2f3"></div><div class="abs blur" style="left:227px;top:641.45px;width:10px;height:10px;background:#e9e9eb"></div><div class="abs blur" style="left:227px;top:651.45px;width:10px;height:9.5px;background:#efeff1"></div><div class="abs blur" style="left:237px;top:641.45px;width:10px;height:10px;background:#e8e8ea"></div><div class="abs blur" style="left:237px;top:651.45px;width:10px;height:9.5px;background:#f3f3f4"></div><div class="abs blur" style="left:247px;top:641.45px;width:10px;height:10px;background:#eaeaec"></div><div class="abs blur" style="left:247px;top:651.45px;width:10px;height:9.5px;background:#ededf0"></div><div class="abs blur" style="left:257px;top:641.45px;width:10px;height:10px;background:#ebebed"></div><div class="abs blur" style="left:257px;top:651.45px;width:10px;height:9.5px;background:#f2f2f3"></div><div class="abs blur" style="left:327px;top:640.45px;width:60px;height:21px;background:#f8f8f9"></div><div class="abs blur" style="left:337px;top:640.45px;width:50px;height:20px;background:#f0f0f2"></div><div class="abs blur" style="left:337px;top:640.45px;width:10px;height:10px;background:#e6e6e9"></div><div class="abs blur" style="left:367px;top:640.45px;width:20px;height:10px;background:#e4e4e7"></div><div class="abs t" style="left:440.5px;top:641.29px;font-size:14px;line-height:14px;font-weight:400;color:#737373;letter-spacing:0.9px;z-index:5;">Inactive</div><div class="abs t" style="left:575px;top:641.29px;font-size:14px;line-height:14px;font-weight:400;color:#737373;letter-spacing:0.9px;z-index:5;">Inactive</div><div class="abs t" style="left:710px;top:641.29px;font-size:14px;line-height:14px;font-weight:400;color:#737373;letter-spacing:0.9px;z-index:5;">Inactive</div><div class="abs t" style="left:847px;top:641.29px;font-size:14px;line-height:14px;font-weight:400;color:#737373;letter-spacing:0.9px;z-index:5;">Inactive</div><div class="abs t" style="left:978.5px;top:641.29px;font-size:14px;line-height:14px;font-weight:400;color:#737373;letter-spacing:0.9px;z-index:5;">Inactive</div><div class="abs t" style="left:1099.5px;top:641.29px;font-size:14px;line-height:14px;font-weight:400;color:#737373;letter-spacing:0.9px;z-index:5;">Inactive</div><div class="abs" style="left:129px;top:723.58px;width:17.5px;height:1px;background:#ebebee"></div><div class="abs" style="left:280px;top:723.58px;width:47px;height:1px;background:#ebebee"></div><div class="abs" style="left:395px;top:723.58px;width:824.5px;height:1px;background:#ebebee"></div><div class="abs blur" style="left:157px;top:691.88px;width:10px;height:10px;background:#e3e3e6"></div><div class="abs blur" style="left:157px;top:701.88px;width:10px;height:9.5px;background:#f2f2f3"></div><div class="abs blur" style="left:167px;top:691.88px;width:10px;height:10px;background:#ececee"></div><div class="abs blur" style="left:167px;top:701.88px;width:10px;height:9.5px;background:#efeff1"></div><div class="abs blur" style="left:177px;top:691.88px;width:10px;height:10px;background:#e9e9eb"></div><div class="abs blur" style="left:177px;top:701.88px;width:10px;height:9.5px;background:#f3f3f4"></div><div class="abs blur" style="left:187px;top:691.88px;width:10px;height:10px;background:#e8e8ea"></div><div class="abs blur" style="left:187px;top:701.88px;width:10px;height:9.5px;background:#ededf0"></div><div class="abs blur" style="left:197px;top:691.88px;width:10px;height:10px;background:#eaeaec"></div><div class="abs blur" style="left:197px;top:701.88px;width:10px;height:9.5px;background:#f2f2f3"></div><div class="abs blur" style="left:207px;top:691.88px;width:10px;height:10px;background:#ebebed"></div><div class="abs blur" style="left:207px;top:701.88px;width:10px;height:9.5px;background:#efeff1"></div><div class="abs blur" style="left:217px;top:691.88px;width:10px;height:10px;background:#e4e4e7"></div><div class="abs blur" style="left:217px;top:701.88px;width:10px;height:9.5px;background:#f3f3f4"></div><div class="abs blur" style="left:227px;top:691.88px;width:10px;height:10px;background:#e3e3e6"></div><div class="abs blur" style="left:227px;top:701.88px;width:10px;height:9.5px;background:#ededf0"></div><div class="abs blur" style="left:237px;top:691.88px;width:10px;height:10px;background:#ececee"></div><div class="abs blur" style="left:237px;top:701.88px;width:10px;height:9.5px;background:#f2f2f3"></div><div class="abs blur" style="left:247px;top:691.88px;width:10px;height:10px;background:#e9e9eb"></div><div class="abs blur" style="left:247px;top:701.88px;width:10px;height:9.5px;background:#efeff1"></div><div class="abs blur" style="left:257px;top:691.88px;width:10px;height:10px;background:#e8e8ea"></div><div class="abs blur" style="left:257px;top:701.88px;width:10px;height:9.5px;background:#f3f3f4"></div><div class="abs blur" style="left:327px;top:690.88px;width:60px;height:21px;background:#f8f8f9"></div><div class="abs blur" style="left:337px;top:690.88px;width:50px;height:20px;background:#f0f0f2"></div><div class="abs blur" style="left:337px;top:690.88px;width:10px;height:10px;background:#e6e6e9"></div><div class="abs blur" style="left:367px;top:690.88px;width:20px;height:10px;background:#e4e4e7"></div><div class="abs t" style="left:440.5px;top:691.57px;font-size:14px;line-height:14px;font-weight:400;color:#737373;letter-spacing:0.9px;z-index:5;">Inactive</div><div class="abs t" style="left:575px;top:691.57px;font-size:14px;line-height:14px;font-weight:400;color:#737373;letter-spacing:0.9px;z-index:5;">Inactive</div><div class="abs t" style="left:710px;top:691.57px;font-size:14px;line-height:14px;font-weight:400;color:#737373;letter-spacing:0.9px;z-index:5;">Inactive</div><div class="abs t" style="left:847px;top:691.57px;font-size:14px;line-height:14px;font-weight:400;color:#737373;letter-spacing:0.9px;z-index:5;">Inactive</div><div class="abs t" style="left:978.5px;top:691.57px;font-size:14px;line-height:14px;font-weight:400;color:#737373;letter-spacing:0.9px;z-index:5;">Inactive</div><div class="abs t" style="left:1099.5px;top:691.57px;font-size:14px;line-height:14px;font-weight:400;color:#737373;letter-spacing:0.9px;z-index:5;">Inactive</div><div class="abs" style="left:129px;top:774.01px;width:17.5px;height:1px;background:#ebebee"></div><div class="abs" style="left:280px;top:774.01px;width:47px;height:1px;background:#ebebee"></div><div class="abs" style="left:395px;top:774.01px;width:824.5px;height:1px;background:#ebebee"></div><div class="abs blur" style="left:157px;top:742.31px;width:10px;height:10px;background:#ebebed"></div><div class="abs blur" style="left:157px;top:752.31px;width:10px;height:9.5px;background:#f3f3f4"></div><div class="abs blur" style="left:167px;top:742.31px;width:10px;height:10px;background:#e4e4e7"></div><div class="abs blur" style="left:167px;top:752.31px;width:10px;height:9.5px;background:#ededf0"></div><div class="abs blur" style="left:177px;top:742.31px;width:10px;height:10px;background:#e3e3e6"></div><div class="abs blur" style="left:177px;top:752.31px;width:10px;height:9.5px;background:#f2f2f3"></div><div class="abs blur" style="left:187px;top:742.31px;width:10px;height:10px;background:#ececee"></div><div class="abs blur" style="left:187px;top:752.31px;width:10px;height:9.5px;background:#efeff1"></div><div class="abs blur" style="left:197px;top:742.31px;width:10px;height:10px;background:#e9e9eb"></div><div class="abs blur" style="left:197px;top:752.31px;width:10px;height:9.5px;background:#f3f3f4"></div><div class="abs blur" style="left:207px;top:742.31px;width:10px;height:10px;background:#e8e8ea"></div><div class="abs blur" style="left:207px;top:752.31px;width:10px;height:9.5px;background:#ededf0"></div><div class="abs blur" style="left:217px;top:742.31px;width:10px;height:10px;background:#eaeaec"></div><div class="abs blur" style="left:217px;top:752.31px;width:10px;height:9.5px;background:#f2f2f3"></div><div class="abs blur" style="left:227px;top:742.31px;width:10px;height:10px;background:#ebebed"></div><div class="abs blur" style="left:227px;top:752.31px;width:10px;height:9.5px;background:#efeff1"></div><div class="abs blur" style="left:237px;top:742.31px;width:10px;height:10px;background:#e4e4e7"></div><div class="abs blur" style="left:237px;top:752.31px;width:10px;height:9.5px;background:#f3f3f4"></div><div class="abs blur" style="left:247px;top:742.31px;width:10px;height:10px;background:#e3e3e6"></div><div class="abs blur" style="left:247px;top:752.31px;width:10px;height:9.5px;background:#ededf0"></div><div class="abs blur" style="left:257px;top:742.31px;width:10px;height:10px;background:#ececee"></div><div class="abs blur" style="left:257px;top:752.31px;width:10px;height:9.5px;background:#f2f2f3"></div><div class="abs blur" style="left:327px;top:741.31px;width:60px;height:21px;background:#f8f8f9"></div><div class="abs blur" style="left:337px;top:741.31px;width:50px;height:20px;background:#f0f0f2"></div><div class="abs blur" style="left:337px;top:741.31px;width:10px;height:10px;background:#e6e6e9"></div><div class="abs blur" style="left:367px;top:741.31px;width:20px;height:10px;background:#e4e4e7"></div><div class="abs t" style="left:440.5px;top:741.85px;font-size:14px;line-height:14px;font-weight:400;color:#737373;letter-spacing:0.9px;z-index:5;">Inactive</div><div class="abs t" style="left:575px;top:741.85px;font-size:14px;line-height:14px;font-weight:400;color:#737373;letter-spacing:0.9px;z-index:5;">Inactive</div><div class="abs t" style="left:710px;top:741.85px;font-size:14px;line-height:14px;font-weight:400;color:#737373;letter-spacing:0.9px;z-index:5;">Inactive</div><div class="abs t" style="left:847px;top:741.85px;font-size:14px;line-height:14px;font-weight:400;color:#737373;letter-spacing:0.9px;z-index:5;">Inactive</div><div class="abs t" style="left:978.5px;top:741.85px;font-size:14px;line-height:14px;font-weight:400;color:#737373;letter-spacing:0.9px;z-index:5;">Inactive</div><div class="abs t" style="left:1099.5px;top:741.85px;font-size:14px;line-height:14px;font-weight:400;color:#737373;letter-spacing:0.9px;z-index:5;">Inactive</div><div class="abs" style="left:129px;top:824.44px;width:17.5px;height:1px;background:#ebebee"></div><div class="abs" style="left:280px;top:824.44px;width:47px;height:1px;background:#ebebee"></div><div class="abs" style="left:395px;top:824.44px;width:824.5px;height:1px;background:#ebebee"></div><div class="abs blur" style="left:157px;top:792.74px;width:10px;height:10px;background:#e8e8ea"></div><div class="abs blur" style="left:157px;top:802.74px;width:10px;height:9.5px;background:#f2f2f3"></div><div class="abs blur" style="left:167px;top:792.74px;width:10px;height:10px;background:#eaeaec"></div><div class="abs blur" style="left:167px;top:802.74px;width:10px;height:9.5px;background:#efeff1"></div><div class="abs blur" style="left:177px;top:792.74px;width:10px;height:10px;background:#ebebed"></div><div class="abs blur" style="left:177px;top:802.74px;width:10px;height:9.5px;background:#f3f3f4"></div><div class="abs blur" style="left:187px;top:792.74px;width:10px;height:10px;background:#e4e4e7"></div><div class="abs blur" style="left:187px;top:802.74px;width:10px;height:9.5px;background:#ededf0"></div><div class="abs blur" style="left:197px;top:792.74px;width:10px;height:10px;background:#e3e3e6"></div><div class="abs blur" style="left:197px;top:802.74px;width:10px;height:9.5px;background:#f2f2f3"></div><div class="abs blur" style="left:207px;top:792.74px;width:10px;height:10px;background:#ececee"></div><div class="abs blur" style="left:207px;top:802.74px;width:10px;height:9.5px;background:#efeff1"></div><div class="abs blur" style="left:217px;top:792.74px;width:10px;height:10px;background:#e9e9eb"></div><div class="abs blur" style="left:217px;top:802.74px;width:10px;height:9.5px;background:#f3f3f4"></div><div class="abs blur" style="left:227px;top:792.74px;width:10px;height:10px;background:#e8e8ea"></div><div class="abs blur" style="left:227px;top:802.74px;width:10px;height:9.5px;background:#ededf0"></div><div class="abs blur" style="left:237px;top:792.74px;width:10px;height:10px;background:#eaeaec"></div><div class="abs blur" style="left:237px;top:802.74px;width:10px;height:9.5px;background:#f2f2f3"></div><div class="abs blur" style="left:247px;top:792.74px;width:10px;height:10px;background:#ebebed"></div><div class="abs blur" style="left:247px;top:802.74px;width:10px;height:9.5px;background:#efeff1"></div><div class="abs blur" style="left:257px;top:792.74px;width:10px;height:10px;background:#e4e4e7"></div><div class="abs blur" style="left:257px;top:802.74px;width:10px;height:9.5px;background:#f3f3f4"></div><div class="abs blur" style="left:327px;top:791.74px;width:60px;height:21px;background:#f8f8f9"></div><div class="abs blur" style="left:337px;top:791.74px;width:50px;height:20px;background:#f0f0f2"></div><div class="abs blur" style="left:337px;top:791.74px;width:10px;height:10px;background:#e6e6e9"></div><div class="abs blur" style="left:367px;top:791.74px;width:20px;height:10px;background:#e4e4e7"></div><div class="abs t" style="left:440.5px;top:792.13px;font-size:14px;line-height:14px;font-weight:400;color:#737373;letter-spacing:0.9px;z-index:5;">Inactive</div><div class="abs t" style="left:575px;top:792.13px;font-size:14px;line-height:14px;font-weight:400;color:#737373;letter-spacing:0.9px;z-index:5;">Inactive</div><div class="abs t" style="left:710px;top:792.13px;font-size:14px;line-height:14px;font-weight:400;color:#737373;letter-spacing:0.9px;z-index:5;">Inactive</div><div class="abs t" style="left:847px;top:792.13px;font-size:14px;line-height:14px;font-weight:400;color:#737373;letter-spacing:0.9px;z-index:5;">Inactive</div><div class="abs t" style="left:978.5px;top:792.13px;font-size:14px;line-height:14px;font-weight:400;color:#737373;letter-spacing:0.9px;z-index:5;">Inactive</div><div class="abs t" style="left:1099.5px;top:792.13px;font-size:14px;line-height:14px;font-weight:400;color:#737373;letter-spacing:0.9px;z-index:5;">Inactive</div>
<div id="scroll"><div id="thumb"></div><div style="position:absolute;left:0;top:0;width:15px;height:15px;background:#f8f8f8"></div><svg style="position:absolute;left:0;top:0;width:15px;height:15px" viewBox="0 0 15 15"><path d="M4.5 9L7.5 6L10.5 9" fill="none" stroke="#a3a3a3" stroke-width="1.6"/></svg><svg style="position:absolute;left:0;top:785px;width:15px;height:15px" viewBox="0 0 15 15"><path d="M4.5 6L7.5 9L10.5 6" fill="none" stroke="#505050" stroke-width="1.8"/></svg></div>
<div id="corners"></div>
</body></html>
